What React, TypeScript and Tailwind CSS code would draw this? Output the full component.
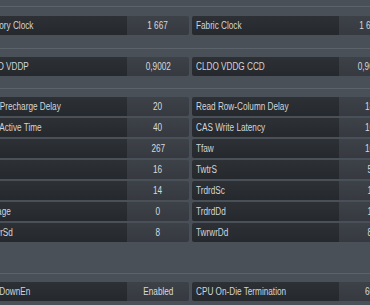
type Row = { label: string; value: string };

const sections: [Row, Row][][] = [
  [[{ label: "Memory Clock", value: "1 667" }, { label: "Fabric Clock", value: "1 667" }]],
  [[{ label: "CLDO VDDP", value: "0,9002" }, { label: "CLDO VDDG CCD", value: "0,9002" }]],
  [
    [{ label: "Row Precharge Delay", value: "20" }, { label: "Read Row-Column Delay", value: "18" }],
    [{ label: "Row Active Time", value: "40" }, { label: "CAS Write Latency", value: "16" }],
    [{ label: "Trfc4", value: "267" }, { label: "Tfaw", value: "16" }],
    [{ label: "Twr", value: "16" }, { label: "TwtrS", value: "5" }],
    [{ label: "Trtp", value: "14" }, { label: "TrdrdSc", value: "1" }],
    [{ label: "Trcpage", value: "0" }, { label: "TrdrdDd", value: "1" }],
    [{ label: "TwrwrSd", value: "8" }, { label: "TwrwrDd", value: "8" }],
  ],
  [[{ label: "GearDownEn", value: "Enabled" }, { label: "CPU On-Die Termination", value: "60" }]],
];

// the app uses a narrow sans; no narrow face is installed, so squeeze Liberation Sans
function Cell({ row, labelW }: { row: Row; labelW: string }) {
  return (
    <div className="flex h-[19px]">
      <div
        className={`flex ${labelW} items-center rounded-l-[2px] bg-gradient-to-b from-[#2d3035] to-[#25282c] pl-[4px] text-[#d2d6da]`}
      >
        <span className="origin-left scale-x-[0.82] whitespace-nowrap">{row.label}</span>
      </div>
      <div className="flex w-[62px] items-center justify-center rounded-r-[2px] bg-gradient-to-b from-[#3d4248] to-[#363a40] text-[#d6dade]">
        <span className="scale-x-[0.82] whitespace-nowrap">{row.value}</span>
      </div>
    </div>
  );
}

function Separator() {
  return <div className="h-px bg-[#5d636b]" />;
}

export default function App() {
  const pads = ["pt-[9px] pb-[13px]", "pt-[8px] pb-[12px]", "pt-[8px] pb-[31px]", "pt-[8px] pb-[12px]"];
  return (
    <div
      className="h-[305px] w-[370px] overflow-hidden bg-[#4a5057] text-[10px] leading-none"
      style={{ fontFamily: '"Liberation Sans", Arial, sans-serif' }}
    >
      <div className="h-[6px]" />
      {sections.map((rows, i) => (
        <div key={i}>
          <Separator />
          <div className={pads[i]}>
            <div className="-ml-[23px] flex w-[424px] flex-col gap-[2px]">
              {rows.map(([l, r], j) => (
                <div key={j} className="grid grid-cols-[212px_209px] gap-[3px]">
                  <Cell row={l} labelW="w-[150px]" />
                  <Cell row={r} labelW="w-[147px]" />
                </div>
              ))}
            </div>
          </div>
        </div>
      ))}
    </div>
  );
}
